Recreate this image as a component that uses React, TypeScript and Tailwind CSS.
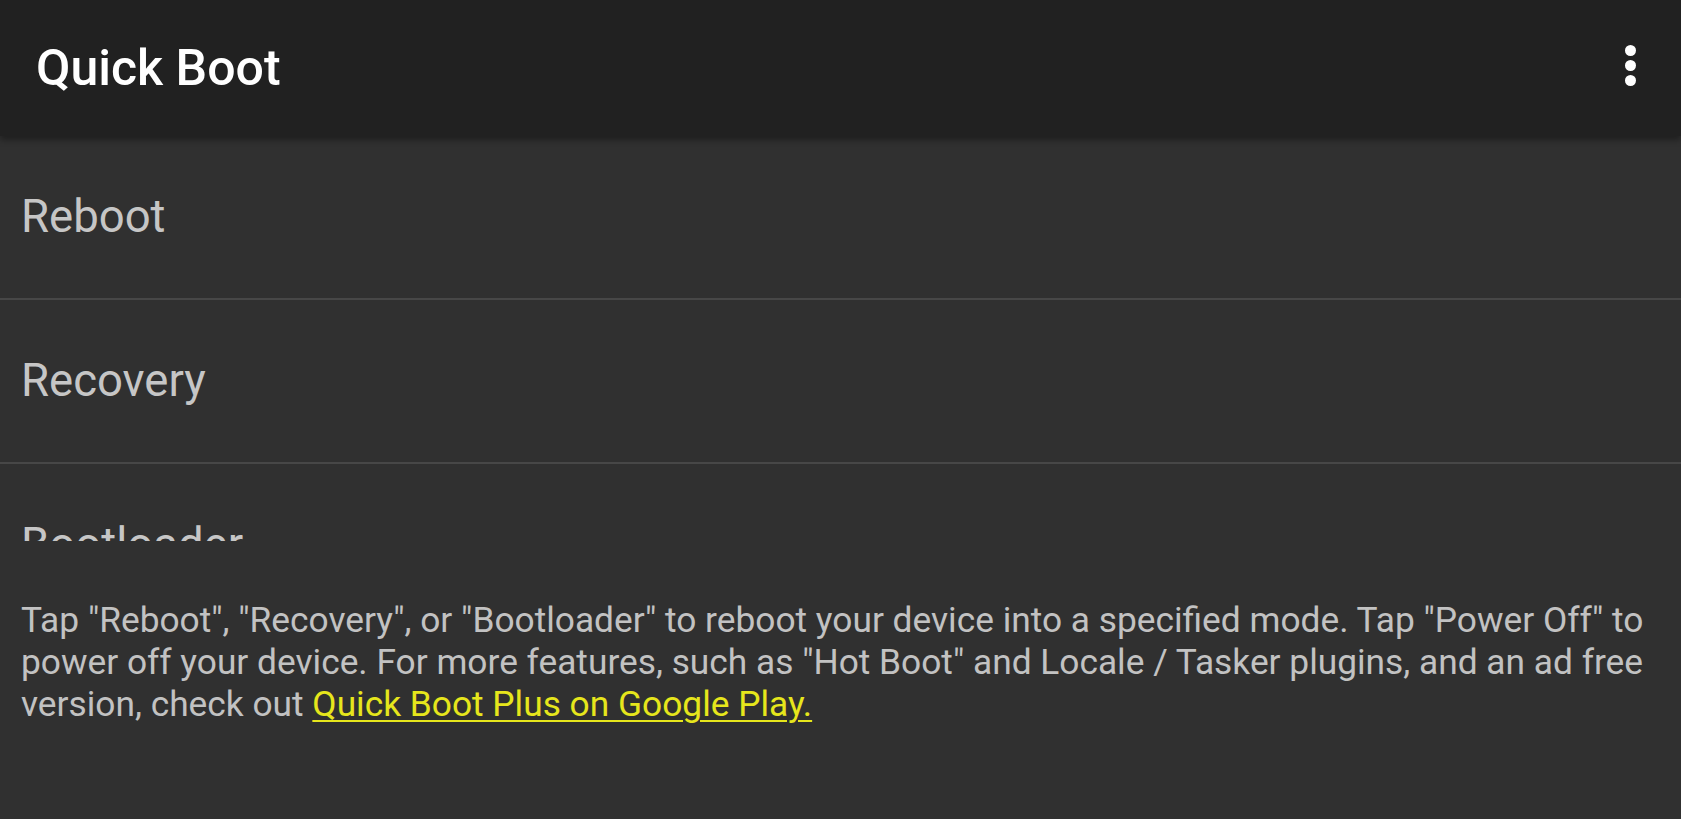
import React from "react";

export default function App() {
  const rows = ["Reboot", "Recovery", "Bootloader", "Power Off"];
  return (
    <div
      className="w-full h-[819px] bg-[#303030] flex flex-col overflow-hidden"
      style={{ fontFamily: "Roboto, 'Noto Sans', sans-serif" }}
    >
      <header className="h-[136px] shrink-0 bg-[#212121] flex items-center justify-between pl-[36px] pr-[45px] shadow-[0_4px_6px_rgba(0,0,0,0.35)] relative z-10">
        <h1 className="text-white text-[50px] font-medium">Quick Boot</h1>
        <div className="flex flex-col items-center gap-[4px] mb-[6px]">
          <span className="block w-[11px] h-[11px] rounded-full bg-white" />
          <span className="block w-[11px] h-[11px] rounded-full bg-white" />
          <span className="block w-[11px] h-[11px] rounded-full bg-white" />
        </div>
      </header>
      <div className="h-[405px] shrink-0 overflow-hidden">
        {rows.map((r) => (
          <div
            key={r}
            className="h-[164px] flex items-center pl-[21px] text-[45.5px] text-[#c6c6c6] border-b-2 border-[#474747]"
          >
            {r}
          </div>
        ))}
      </div>
      <p className="pl-[21px] pr-[10px] pt-[58px] text-[35.3px] leading-[42px] text-[#c2c2c2] whitespace-nowrap">
        Tap "Reboot", "Recovery", or "Bootloader" to reboot your device into a specified mode. Tap "Power Off" to
        <br />
        power off your device. For more features, such as "Hot Boot" and Locale / Tasker plugins, and an ad free
        <br />
        version, check out{" "}
        <a className="text-[#e6e61c] underline decoration-[2px] underline-offset-[4px]">Quick Boot Plus on Google Play.</a>
      </p>
    </div>
  );
}
